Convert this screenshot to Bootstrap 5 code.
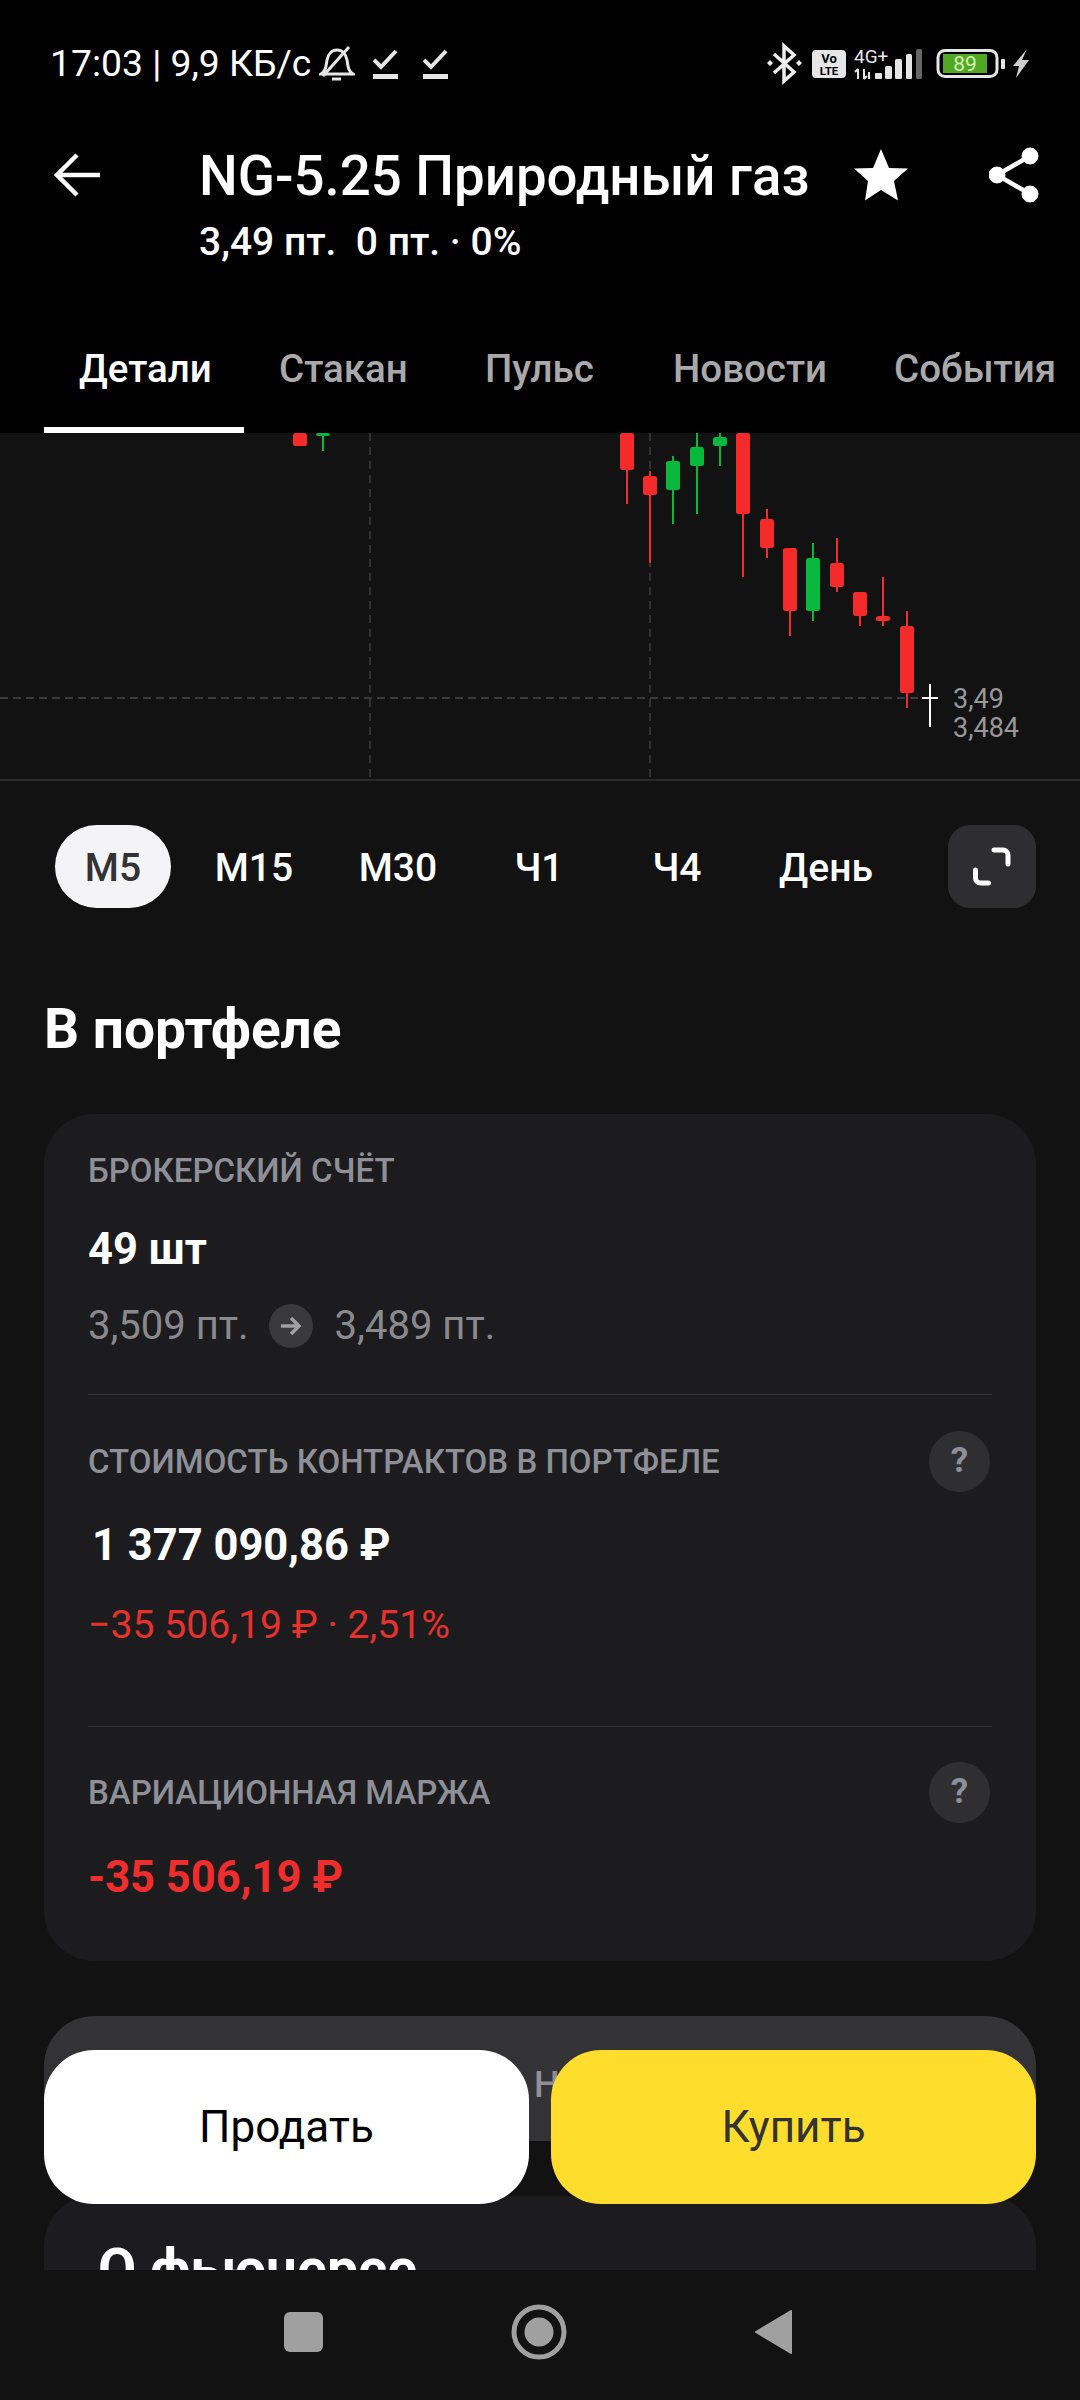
<!DOCTYPE html>
<html lang="ru">
<head>
  <meta charset="UTF-8">
  <title>NG-5.25 Природный газ</title>
  <meta name="viewport" content="width=device-width, initial-scale=1">
  <link href="https://cdn.jsdelivr.net/npm/bootstrap@5.3.3/dist/css/bootstrap.min.css" rel="stylesheet">
  <style>
    body {
      background-color: #000;
      font-family: Roboto, "Liberation Sans", sans-serif;
      color: #fff;
    }

    .app-screen {
      width: 1080px;
      height: 2400px;
      overflow: hidden;
    }

    .status-bar {
      height: 122px;
      padding: 5px 45px 0 50px;
      font-size: 37.3px;
    }

    .bell-icon {
      margin-left: 8px;
    }

    .check-icon {
      margin-left: 18px;
    }

    .check-icon + .check-icon {
      margin-left: 25px;
    }

    .top-head {
      height: 155px;
      padding: 22px 0 0 52px;
    }

    .back-btn {
      width: 147px;
      padding-top: 7px;
    }

    .title-text {
      font-size: 54.6px;
      font-weight: 500;
      line-height: 64px;
      width: 655px;
      white-space: nowrap;
    }

    .sub-text {
      font-size: 39px;
      font-weight: 500;
      line-height: 50px;
      margin-top: 9px;
      white-space: pre;
    }

    .star-icon {
      margin-top: 5px;
    }

    .share-icon {
      margin: 3px 0 0 81px;
    }

    .tab-row {
      height: 156px;
      padding: 62px 0 0 79px;
      font-size: 38.5px;
      font-weight: 500;
      line-height: 60px;
      color: #a9a9ab;
      white-space: nowrap;
    }

    .tab-item:nth-child(1) { width: 200px; color: #fff; }
    .tab-item:nth-child(2) { width: 206px; }
    .tab-item:nth-child(3) { width: 188px; }
    .tab-item:nth-child(4) { width: 221px; }

    .tab-line {
      position: absolute;
      left: 44px;
      bottom: 0;
      width: 200px;
      height: 6px;
      background-color: #fff;
    }

    .page-scroll {
      background-color: #121212;
      overflow: hidden;
    }

    .chart-svg {
      display: block;
    }

    .chart-svg text {
      font-family: Roboto, "Liberation Sans", sans-serif;
      font-size: 27px;
      fill: #98989b;
    }

    .tf-row {
      height: 83px;
      margin-top: 44px;
      padding: 0 44px 0 55px;
    }

    .tf-item {
      height: 83px;
      padding-top: 3px;
      font-size: 39px;
      font-weight: 500;
    }

    .tf-item:nth-child(1) { width: 116px; }
    .tf-item:nth-child(2) { width: 166px; }
    .tf-item:nth-child(3) { width: 122px; }
    .tf-item:nth-child(4) { width: 160px; }
    .tf-item:nth-child(5) { width: 116px; }
    .tf-item:nth-child(6) { width: 182px; }

    .tf-on {
      background-color: #f4f4f6;
      color: #333;
      border-radius: 42px;
    }

    .tf-full {
      width: 88px;
      height: 83px;
      background-color: #2e2e30;
      border-radius: 22px;
    }

    .section-title {
      font-size: 55px;
      font-weight: 700;
      line-height: 60px;
      margin: 91px 44px 55px;
    }

    .dark-panel {
      background-color: #1c1c1e;
      border-radius: 50px;
      margin: 0 44px;
      padding: 37px 44px 58px;
    }

    .info-head {
      font-size: 33px;
      font-weight: 500;
      color: #8e8f97;
      line-height: 40px;
    }

    .info-big {
      font-size: 43.5px;
      font-weight: 700;
      line-height: 50px;
    }

    .info-grey {
      font-size: 40px;
      color: #8a8a8e;
      line-height: 50px;
    }

    .info-delta {
      font-size: 39.2px;
      color: #e5322f;
      line-height: 50px;
      margin: 29px 0 76px;
    }

    .info-red {
      color: #f02d2d;
    }

    .arrow-dot {
      width: 44px;
      height: 44px;
      margin: 0 22px 0 20px;
      background-color: #3a3a3c;
      border-radius: 50%;
    }

    .help-dot {
      width: 61px;
      height: 61px;
      margin-right: 2px;
      background-color: #2f2f32;
      border-radius: 50%;
      font-size: 35px;
      font-weight: 700;
      color: #8e8f97;
    }

    .panel-line {
      height: 1px;
      background-color: #333336;
    }

    .gap-a { margin-top: 34px; }
    .gap-b { margin-top: 26px; }
    .gap-c { margin-top: 43px; }
    .gap-d { margin-top: 36px; }
    .gap-e { margin-top: 29px; }
    .gap-f { margin-top: 35px; }
    .gap-g { margin-top: 30px; }

    .grey-panel {
      height: 125px;
      background-color: #333335;
      border-radius: 50px;
      margin: 55px 44px 0;
      padding: 45px 0 0 490px;
      font-size: 36px;
      font-weight: 500;
      line-height: 48px;
      color: #8e8f97;
    }

    .about-panel {
      margin-top: 55px;
      height: 400px;
      padding: 44px 54px 0;
    }

    .about-title {
      font-size: 55.5px;
      font-weight: 700;
      line-height: 60px;
    }

    .trade-row {
      position: absolute;
      left: 44px;
      top: 2050px;
      width: 992px;
      gap: 22px;
    }

    .trade-btn {
      height: 154px;
      border: 0;
      border-radius: 50px;
      font-size: 44px;
      --bs-btn-color: #000;
      --bs-btn-hover-color: #000;
    }

    .trade-sell {
      --bs-btn-bg: #fff;
      --bs-btn-hover-bg: #fff;
    }

    .trade-buy {
      --bs-btn-bg: #ffdd2d;
      --bs-btn-hover-bg: #ffdd2d;
      --bs-btn-color: #333;
      --bs-btn-hover-color: #333;
    }

    .bottom-nav {
      height: 130px;
      background-color: #121212;
    }
  </style>
</head>
<body>

<div class="app-screen position-relative d-flex flex-column">

  <div class="status-bar d-flex justify-content-between align-items-center flex-shrink-0">
    <div class="d-flex align-items-center">
      <span>17:03 | 9,9 КБ/с</span>
      <svg class="bell-icon" width="36" height="38" viewBox="0 0 36 38" fill="none" stroke="#e6e6e6" stroke-width="3">
        <path d="M2 29c5-3 5-8 6-14 1-6 5-10 10-10s9 4 10 10c1 6 1 11 6 14Z"/>
        <path d="M13 34h9M30 2 4 31"/>
      </svg>
      <svg class="check-icon" width="25" height="30" viewBox="0 0 25 30" fill="none" stroke="#e6e6e6">
        <path d="M1 11l7 7L23 2" stroke-width="4"/>
        <path d="M0 27.5h25" stroke-width="5"/>
      </svg>
      <svg class="check-icon" width="25" height="30" viewBox="0 0 25 30" fill="none" stroke="#e6e6e6">
        <path d="M1 11l7 7L23 2" stroke-width="4"/>
        <path d="M0 27.5h25" stroke-width="5"/>
      </svg>
    </div>
    <svg width="275" height="45" viewBox="760 40 275 45">
      <!-- bluetooth -->
      <path d="M774 53l20 18-10 9V45l10 9-20 18" fill="none" stroke="#eee" stroke-width="3.5"/>
      <path d="M770 59l3 3-3 3-3-3ZM799 59l3 3-3 3-3-3Z" fill="#eee"/>
      <!-- volte -->
      <rect x="812" y="49" width="34" height="28" rx="4" fill="#e6e6e6"/>
      <text x="829" y="62" text-anchor="middle" font-family="Roboto" font-size="13" font-weight="700" fill="#000">Vo</text>
      <text x="829" y="74" text-anchor="middle" font-family="Roboto" font-size="11.5" font-weight="700" fill="#000">LTE</text>
      <!-- signal -->
      <text x="854" y="62" font-family="Roboto" font-size="19" fill="#e6e6e6">4G+</text>
      <path d="M858 68v10M855 71l3-3M864 68v10M867 75l-3 3M869 71v7" stroke="#e6e6e6" stroke-width="2" fill="none"/>
      <rect x="875" y="72" width="7" height="6" rx="1" fill="#e6e6e6"/>
      <rect x="885" y="65" width="7" height="13" rx="1.5" fill="#e6e6e6"/>
      <rect x="895" y="58" width="7" height="20" rx="1.5" fill="#e6e6e6"/>
      <rect x="906" y="53" width="6" height="25" rx="1.5" fill="#e6e6e6"/>
      <rect x="916" y="48" width="6" height="30" rx="1.5" fill="#666"/>
      <!-- battery -->
      <rect x="938" y="49.5" width="59" height="26" rx="7" fill="none" stroke="#e6e6e6" stroke-width="3"/>
      <rect x="943" y="53" width="44" height="19" fill="#52a824"/>
      <text x="965" y="70" text-anchor="middle" font-family="Roboto" font-size="21" fill="#d4f5b5">89</text>
      <rect x="1001" y="58" width="4" height="10" rx="1" fill="#e6e6e6"/>
      <!-- charging -->
      <path d="M1027 48 1013 65h6l-3 12 13-18h-7Z" fill="#cfcfcf"/>
    </svg>
  </div>

  <div class="top-head d-flex flex-shrink-0">
    <div class="back-btn">
      <svg width="48" height="48" viewBox="0 0 48 48" fill="none" stroke="#fff" stroke-width="4.5">
        <path d="M48 24H6M25 4 5 24l20 20"/>
      </svg>
    </div>
    <div>
      <div class="title-text">NG-5.25 Природный газ</div>
      <div class="sub-text">3,49 пт.  0 пт. · 0%</div>
    </div>
    <svg class="star-icon" width="54" height="52" viewBox="0 0 54 52">
      <path d="M27 0l8 19 19 .5L40 32l4 19.5L27 41 11 51.5 14 32 0 19.5 19 19Z" fill="#fff"/>
    </svg>
    <svg class="share-icon" width="50" height="56" viewBox="0 0 50 56" fill="none" stroke="#fff">
      <path d="M41 9 8 28l33 19" stroke-width="4.5"/>
      <circle cx="41" cy="9" r="8" fill="#fff"/>
      <circle cx="8" cy="28" r="8" fill="#fff"/>
      <circle cx="41" cy="47" r="8" fill="#fff"/>
    </svg>
  </div>

  <div class="tab-row position-relative d-flex flex-shrink-0">
    <span class="tab-item">Детали</span>
    <span class="tab-item">Стакан</span>
    <span class="tab-item">Пульс</span>
    <span class="tab-item">Новости</span>
    <span class="tab-item">События</span>
    <div class="tab-line"></div>
  </div>

  <div class="page-scroll flex-grow-1">
    <svg class="chart-svg" id="chart" width="1080" height="348" viewBox="0 433 1080 348"></svg>

    <div class="tf-row d-flex align-items-start">
      <div class="tf-item tf-on d-flex align-items-center justify-content-center">M5</div>
      <div class="tf-item d-flex align-items-center justify-content-center">M15</div>
      <div class="tf-item d-flex align-items-center justify-content-center">M30</div>
      <div class="tf-item d-flex align-items-center justify-content-center">Ч1</div>
      <div class="tf-item d-flex align-items-center justify-content-center">Ч4</div>
      <div class="tf-item d-flex align-items-center justify-content-center">День</div>
      <div class="tf-full d-flex align-items-center justify-content-center ms-auto">
        <svg width="44" height="44" viewBox="0 0 44 44" fill="none" stroke="#fff" stroke-width="5" stroke-linecap="round" stroke-linejoin="round">
          <path d="M24 5h9a5 5 0 0 1 5 5v9M5.5 25v8a5 5 0 0 0 5 5h8"/>
        </svg>
      </div>
    </div>

    <div class="section-title">В портфеле</div>

    <div class="dark-panel">
      <div class="info-head">БРОКЕРСКИЙ СЧЁТ</div>
      <div class="info-big gap-a">49 шт</div>
      <div class="info-grey d-flex align-items-center gap-b">
        <span>3,509 пт.</span>
        <span class="arrow-dot d-flex align-items-center justify-content-center">
          <svg width="22" height="20" viewBox="0 0 22 20" fill="none" stroke="#a0a0a3" stroke-width="3.5">
            <path d="M1 10h18M11 2l8 8-8 8"/>
          </svg>
        </span>
        <span>3,489 пт.</span>
      </div>
      <div class="panel-line gap-c"></div>

      <div class="d-flex justify-content-between align-items-center gap-d">
        <span class="info-head">СТОИМОСТЬ КОНТРАКТОВ В ПОРТФЕЛЕ</span>
        <span class="help-dot d-flex align-items-center justify-content-center">?</span>
      </div>
      <div class="info-big gap-e ps-1">1 377 090,86 ₽</div>
      <div class="info-delta">−35 506,19 ₽ · 2,51%</div>
      <div class="panel-line"></div>

      <div class="d-flex justify-content-between align-items-center gap-f">
        <span class="info-head">ВАРИАЦИОННАЯ МАРЖА</span>
        <span class="help-dot d-flex align-items-center justify-content-center">?</span>
      </div>
      <div class="info-big info-red gap-g">-35 506,19 ₽</div>
    </div>

    <div class="grey-panel">Настроить</div>

    <div class="dark-panel about-panel">
      <div class="about-title">О фьючерсе</div>
    </div>
  </div>

  <div class="trade-row d-flex">
    <button class="btn trade-btn trade-sell flex-fill w-50">Продать</button>
    <button class="btn trade-btn trade-buy flex-fill w-50">Купить</button>
  </div>

  <div class="bottom-nav d-flex flex-shrink-0">
    <svg width="1080" height="130" viewBox="0 2270 1080 130">
      <rect x="284" y="2312" width="39" height="40" rx="6" fill="#a0a0a0"/>
      <circle cx="539" cy="2332" r="25" fill="none" stroke="#a0a0a0" stroke-width="5"/>
      <circle cx="539" cy="2332" r="14.5" fill="#a0a0a0"/>
      <path d="M791 2311v42l-35-21Z" fill="#a0a0a0" stroke="#a0a0a0" stroke-width="2" stroke-linejoin="round"/>
    </svg>
  </div>
</div>

<script src="https://cdn.jsdelivr.net/npm/bootstrap@5.3.3/dist/js/bootstrap.bundle.min.js"></script>
<script>
  // x, wick top, wick bottom, body top, body bottom, colour
  const candles = [
    [300, 433, 446, 433, 446, 'r'],
    [323, 433, 451, 433, 436, 'g'],
    [627, 433, 504, 433, 470, 'r'],
    [650, 471, 563, 476, 495, 'r'],
    [673, 456, 524, 461, 490, 'g'],
    [697, 433, 514, 447, 466, 'g'],
    [720, 433, 466, 437, 446, 'g'],
    [743, 433, 577, 433, 514, 'r'],
    [767, 509, 558, 519, 548, 'r'],
    [790, 548, 636, 548, 611, 'r'],
    [813, 543, 621, 558, 611, 'g'],
    [837, 538, 592, 563, 587, 'r'],
    [860, 592, 626, 592, 616, 'r'],
    [883, 577, 626, 616, 621, 'r'],
    [907, 611, 708, 626, 693, 'r']
  ];
  const colours = { r: '#f52a2a', g: '#08b83c' };

  let svg = '';
  [370, 650].forEach(x => {
    svg += `<line x1="${x}" y1="433" x2="${x}" y2="780" stroke="#3c3c3c" stroke-width="1.5" stroke-dasharray="8 6"/>`;
  });
  svg += `<line x1="0" y1="698" x2="925" y2="698" stroke="#484848" stroke-width="1.5" stroke-dasharray="8 5"/>`;
  svg += `<line x1="0" y1="780" x2="1080" y2="780" stroke="#333" stroke-width="1.5"/>`;

  candles.forEach(([x, wt, wb, bt, bb, c]) => {
    const fill = colours[c];
    svg += `<rect x="${x - 1}" y="${wt}" width="2" height="${wb - wt}" fill="${fill}"/>`;
    svg += `<rect x="${x - 7}" y="${bt}" width="14" height="${bb - bt}" rx="2.5" fill="${fill}"/>`;
  });

  svg += `<line x1="930" y1="684" x2="930" y2="727" stroke="#fff" stroke-width="2"/>`;
  svg += `<line x1="922" y1="698" x2="938" y2="698" stroke="#fff" stroke-width="2"/>`;
  svg += `<text x="953" y="708">3,49</text><text x="953" y="737">3,484</text>`;

  document.getElementById('chart').innerHTML = svg;
</script>

</body>
</html>
